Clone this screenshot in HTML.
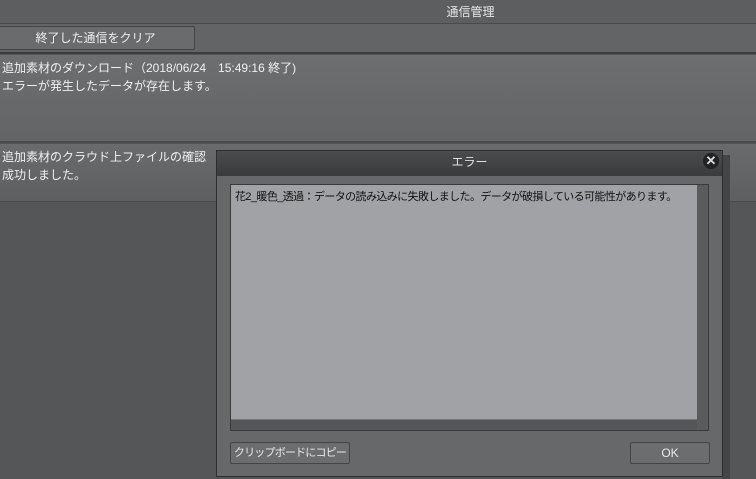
<!DOCTYPE html>
<html><head><meta charset="utf-8"><style>
body{margin:0;width:756px;height:479px;overflow:hidden;background:#555658;font-family:"Liberation Sans","Noto Sans CJK JP",sans-serif;font-size:12px;color:#f0f0f0;position:relative}
div{position:absolute;box-sizing:border-box}
</style></head><body>
<div style="left:0;top:0;width:756px;height:24px;background:#5d5e60;border-bottom:1px solid #4a4a4c;text-align:center;line-height:24px;padding-left:185px;color:#e8e8e8">通信管理</div>
<div style="left:0;top:24px;width:756px;height:30px;background:#636466;border-bottom:2px solid #3c3c3e"></div>
<div style="left:-4px;top:26px;width:199px;height:24px;background:#6a6b6d;border:1px solid #444;border-radius:2px;text-align:center;line-height:22px;color:#eee">終了した通信をクリア</div>
<div style="left:0;top:55px;width:756px;height:88px;background:linear-gradient(#6d6e70,#636466);border-bottom:2px solid #4a4a4c;padding:4px 2px;line-height:18px">追加素材のダウンロード（2018/06/24　15:49:16 終了)<br>エラーが発生したデータが存在します。</div>
<div style="left:0;top:144px;width:756px;height:58px;background:linear-gradient(#6a6b6d,#5e5f61);border-bottom:1px solid #4a4a4c;padding:4px 2px;line-height:18px">追加素材のクラウド上ファイルの確認<br>成功しました。</div>
<div style="left:722px;top:155px;width:8px;height:324px;background:#444547"></div>
<div style="left:216px;top:150px;width:507px;height:327px;background:#67686a;border:1px solid #2e2e30"></div>
<div style="left:217px;top:151px;width:505px;height:25px;background:linear-gradient(#4a4b4d,#3a3b3d);text-align:center;line-height:23px;color:#e0e0e0">エラー</div>
<div style="left:703px;top:153px;width:16px;height:16px;border-radius:50%;background:#222;color:#ddd;font-size:13px;font-weight:bold;text-align:center;line-height:16px">✕</div>
<div style="left:230px;top:184px;width:479px;height:247px;background:#a0a2a6;border:1px solid #3a3a3c;color:#111;font-size:11px;padding:3px 4px;letter-spacing:-0.6px;white-space:nowrap">花2_暖色_透過：データの読み込みに失敗しました。データが破損している可能性があります。</div>
<div style="left:697px;top:185px;width:11px;height:245px;background:#5a5b5d"></div>
<div style="left:231px;top:419px;width:466px;height:11px;background:#555658;border-top:1px solid #777"></div>
<div style="left:230px;top:442px;width:120px;height:22px;background:#6c6d6f;border:1px solid #444;border-radius:2px;font-size:11px;text-align:center;line-height:20px;color:#e8e8e8;white-space:nowrap;letter-spacing:-0.8px">クリップボードにコピー</div>
<div style="left:630px;top:442px;width:80px;height:22px;background:#6c6d6f;border:1px solid #444;border-radius:2px;text-align:center;line-height:20px;color:#e8e8e8">OK</div>
</body></html>
